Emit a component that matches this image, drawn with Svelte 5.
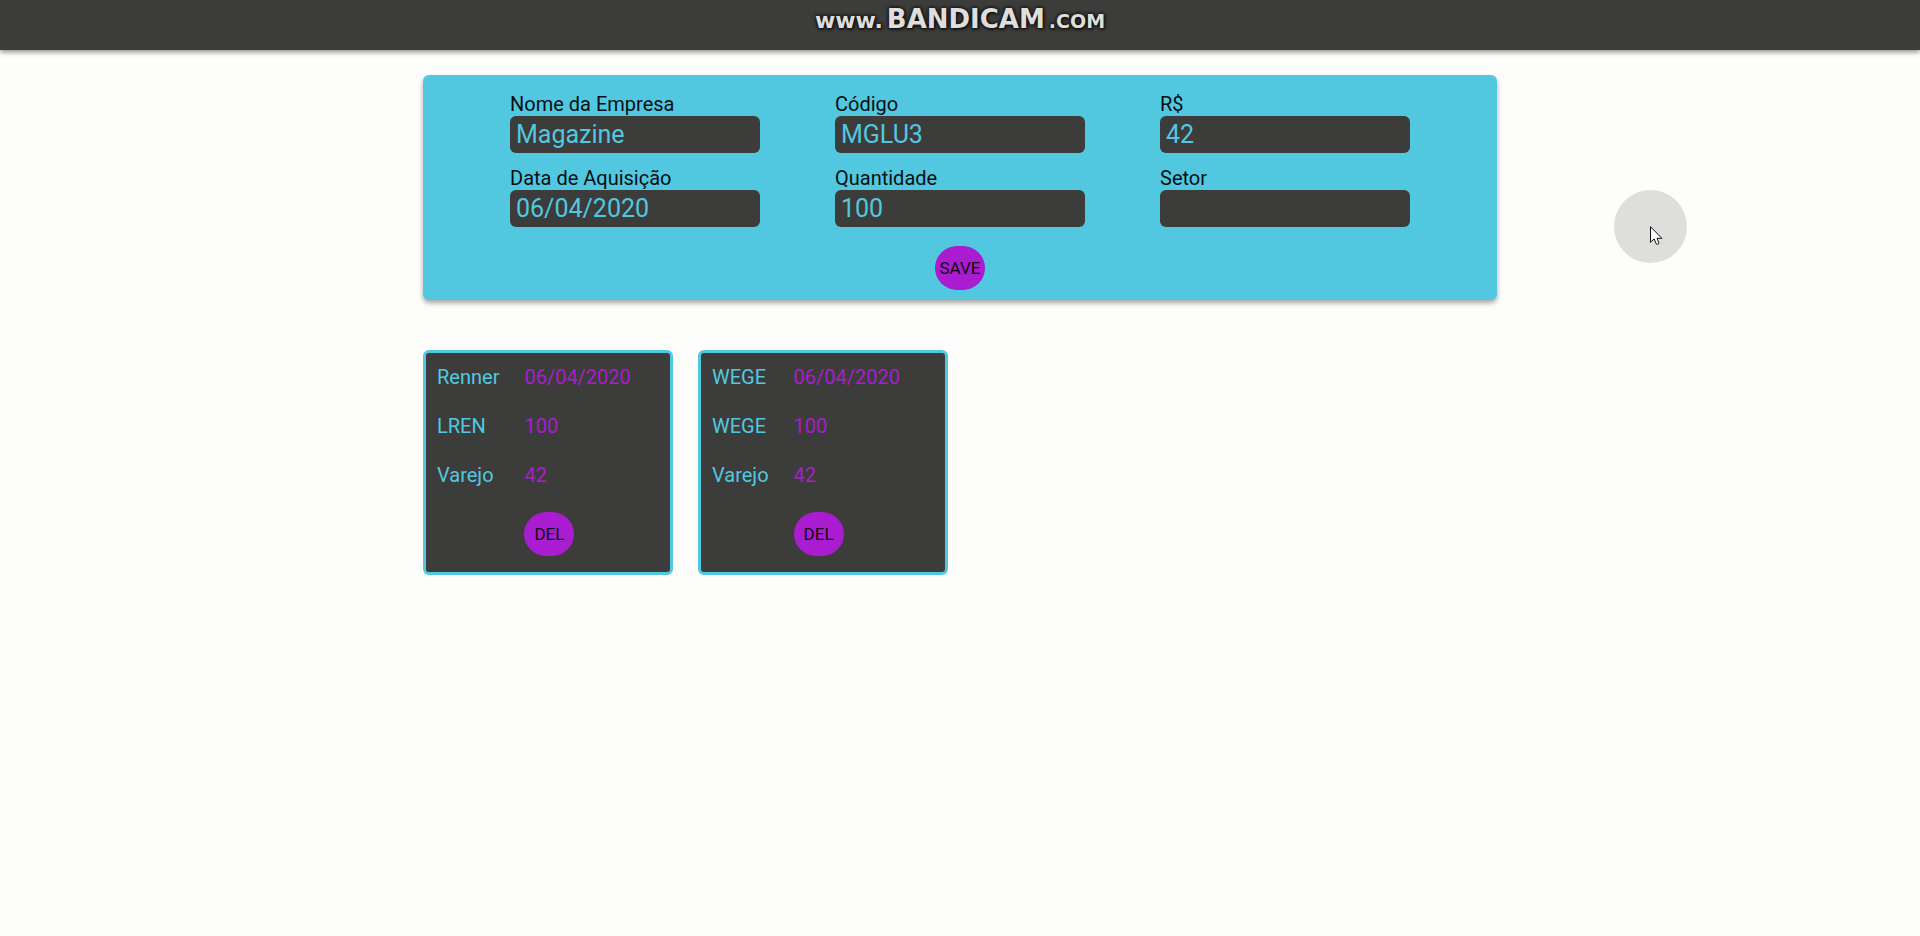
<script>
  let fields = $state([
    { id: 'empresa', label: 'Nome da Empresa', value: 'Magazine' },
    { id: 'codigo', label: 'Código', value: 'MGLU3' },
    { id: 'preco', label: 'R$', value: '42' },
    { id: 'data', label: 'Data de Aquisição', value: '06/04/2020' },
    { id: 'quantidade', label: 'Quantidade', value: '100' },
    { id: 'setor', label: 'Setor', value: '' }
  ]);

  let stocks = $state([
    { id: 1, empresa: 'Renner', codigo: 'LREN', setor: 'Varejo', data: '06/04/2020', quantidade: '100', preco: '42' },
    { id: 2, empresa: 'WEGE', codigo: 'WEGE', setor: 'Varejo', data: '06/04/2020', quantidade: '100', preco: '42' }
  ]);

  function save(event) {
    event.preventDefault();
    const entry = Object.fromEntries(fields.map((f) => [f.id, f.value]));
    stocks.push({ ...entry, id: Date.now() });
  }

  function remove(id) {
    stocks = stocks.filter((s) => s.id !== id);
  }
</script>

<header>
  <div class="brand"><span class="small">www.</span><span class="name">BANDICAM</span><span class="small com">.COM</span></div>
</header>

<main>
  <form class="panel" onsubmit={save}>
    <div class="fields">
      {#each fields as field (field.id)}
        <div class="field">
          <label for={field.id}>{field.label}</label>
          <input id={field.id} type="text" autocomplete="off" bind:value={field.value} />
        </div>
      {/each}
    </div>
    <button type="submit">SAVE</button>
  </form>

  <section class="cards">
    {#each stocks as stock (stock.id)}
      <article class="card">
        <span>{stock.empresa}</span><span class="value">{stock.data}</span>
        <span>{stock.codigo}</span><span class="value">{stock.quantidade}</span>
        <span>{stock.setor}</span><span class="value">{stock.preco}</span>
        <button class="delete" type="button" onclick={() => remove(stock.id)}>DEL</button>
      </article>
    {/each}
  </section>
</main>

<div class="pointer" aria-hidden="true">
  <svg width="13" height="20" viewBox="0 0 13 20">
    <path d="M.5 .7V16.3L4.1 12.9L6.4 18.1Q7.6 19 9 17.4L7 12.3H11.8Z" fill="#fff" stroke="#111" stroke-width="1" />
  </svg>
</div>

<style>
  :global(body) {
    background: #fdfdfc;
    color: #0a0f12;
    font-family: Roboto, sans-serif;
    font-size: 20px;
    line-height: 24px;
  }

  header {
    display: flex;
    justify-content: center;
    height: 50px;
    background: #3c3c3b;
    box-shadow: 0 2px 5px rgba(0, 0, 0, 0.45);
  }

  .brand {
    color: #dededc;
    font-family: "DejaVu Sans", sans-serif;
    font-weight: 700;
    line-height: 38px;
    white-space: nowrap;
    text-shadow: 0 0 3px #111, 0 0 4px #111, 1px 1px 3px #111;
  }

  .name {
    margin: 0 4px;
    font-size: 26px;
  }

  .small {
    font-size: 22px;
  }

  .com {
    font-size: 19px;
  }

  main {
    width: 56%;
    max-width: 1074px;
    margin: 25px auto 0;
  }

  .panel {
    display: flex;
    flex-direction: column;
    align-items: center;
    gap: 19px;
    padding: 17px 20px 10px;
    border-radius: 6px;
    background: #52c8e0;
    box-shadow: 0 3px 5px rgba(0, 0, 0, 0.35);
  }

  .fields {
    display: flex;
    flex-wrap: wrap;
    justify-content: center;
    gap: 13px 75px;
  }

  .field {
    display: flex;
    flex-direction: column;
    width: 250px;
  }

  input {
    box-sizing: border-box;
    width: 100%;
    height: 37px;
    padding: 0 6px;
    border: 0;
    border-radius: 6px;
    outline: 0;
    background: #3c3c3b;
    color: #52c8e0;
    font: 25px Roboto, sans-serif;
  }

  button {
    width: 50px;
    height: 44px;
    padding: 0;
    border: 0;
    border-radius: 22px;
    background: #a91ccf;
    color: #0d0610;
    font: 17px Roboto, sans-serif;
    cursor: pointer;
  }

  .cards {
    display: flex;
    flex-wrap: wrap;
    gap: 25px;
    margin-top: 50px;
  }

  .card {
    box-sizing: border-box;
    display: grid;
    grid-template-columns: auto 1fr;
    gap: 25px;
    width: 250px;
    padding: 12px 11px 16px;
    border: 3px solid #52c8e0;
    border-radius: 6px;
    background: #3c3c3b;
    color: #52c8e0;
  }

  .value {
    color: #a91ccf;
  }

  .delete {
    grid-column: 2;
  }

  .pointer {
    position: absolute;
    top: 190px;
    left: 1614px;
    box-sizing: border-box;
    width: 73px;
    height: 73px;
    padding: 36px 0 0 36px;
    border-radius: 50%;
    background: #dededc;
    line-height: 0;
    pointer-events: none;
  }
</style>
